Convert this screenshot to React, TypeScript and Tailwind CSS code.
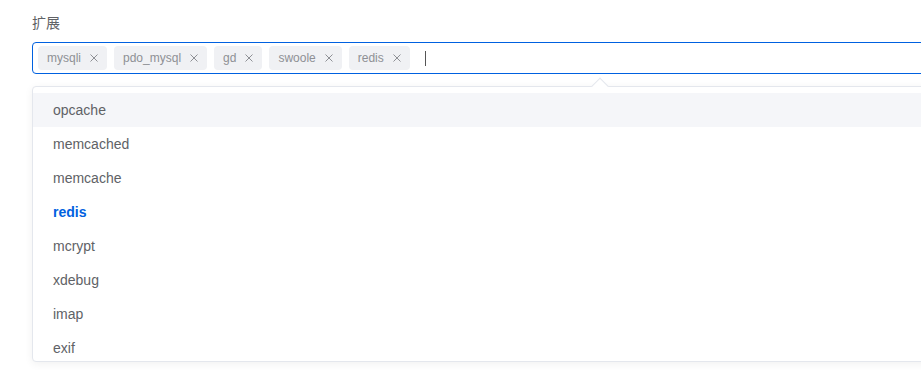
import React from 'react';

const selected = ['mysqli', 'pdo_mysql', 'gd', 'swoole', 'redis'];
const options = ['opcache', 'memcached', 'memcache', 'redis', 'mcrypt', 'xdebug', 'imap', 'exif'];

export default function App() {
  return (
    <div
      className="w-[921px] h-[384px] overflow-hidden bg-white"
      style={{ fontFamily: '"Liberation Sans", Arial, "Noto Sans CJK SC", sans-serif' }}
    >
      <div className="pl-8 pt-[13px]">
        <div className="text-[14px] leading-[20px] text-[#606266]">扩展</div>

        {/* select input */}
        <div className="relative mt-[9px] w-[1000px]">
          <div className="h-[32px] border border-[#0061e0] rounded-[4px] flex items-center pl-[5px]">
            <div className="flex items-center gap-[7px]">
              {selected.map(tag => (
                <span
                  key={tag}
                  className="h-[24px] flex items-center pl-[9px] pr-[8px] rounded-[4px] bg-[#f0f1f4] text-[12px] text-[#8e9095]"
                >
                  {tag}
                  <svg className="ml-[8px]" width="10" height="10" viewBox="0 0 10 10" fill="none">
                    <path d="M1.5 1.5l7 7M8.5 1.5l-7 7" stroke="#8e9095" strokeWidth="1" />
                  </svg>
                </span>
              ))}
            </div>
            <span className="ml-[15px] w-px h-[15px] bg-[#555]" />
          </div>

          {/* dropdown */}
          <div className="relative mt-[12px] border border-[#e4e7ed] rounded-[4px] bg-white shadow-[0_2px_8px_rgba(0,0,0,0.06)]">
            <div className="absolute -top-[7px] left-[561px] w-[12px] h-[12px] rotate-45 bg-white border-l border-t border-[#e4e7ed]" />
            <div className="relative max-h-[274px] overflow-hidden pt-[6px]">
              {options.map((opt, i) => (
                <div
                  key={opt}
                  className={
                    'h-[34px] flex items-center px-5 text-[14px] ' +
                    (i === 0 ? 'bg-[#f5f6f9] ' : '') +
                    (opt === 'redis' ? 'text-[#0061e0] font-bold' : 'text-[#606266]')
                  }
                >
                  {opt}
                </div>
              ))}
            </div>
          </div>
        </div>
      </div>
    </div>
  );
}
